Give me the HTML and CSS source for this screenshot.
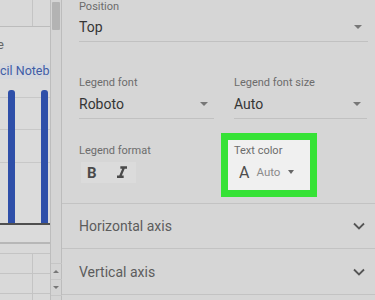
FILE: index.html
```html
<!DOCTYPE html>
<html>
<head>
<meta charset="utf-8">
<link rel="stylesheet" href="styles.css">
</head>
<body>
<div class="app">
  <div class="sheet">
    <div class="toprow"><div class="cell c1"></div><div class="cell"></div></div>
    <div class="chart">
      <div class="title">e</div>
      <div class="legend"><span>cil Noteb</span></div>
      <div class="plot">
        <div class="bar"></div>
        <div class="bar"></div>
      </div>
    </div>
    <div class="rows">
      <div class="gridrow"><div class="cell c1"></div><div class="cell"></div></div>
      <div class="gridrow"><div class="cell c1"></div><div class="cell"></div></div>
      <div class="gridrow"><div class="cell c1"></div><div class="cell"></div></div>
    </div>
  </div>
  <div class="vscroll">
    <div class="thumb"></div>
    <div class="track"></div>
    <div class="sbtn"><span class="tri up"></span></div>
    <div class="sbtn"><span class="tri down"></span></div>
    <div class="sfoot"></div>
  </div>
  <div class="panel">
    <div class="settings">
      <div class="field">
        <div class="lbl">Position</div>
        <div class="sel"><span>Top</span><i class="caret"></i></div>
      </div>
      <div class="row2">
        <div class="field">
          <div class="lbl">Legend font</div>
          <div class="sel"><span>Roboto</span><i class="caret"></i></div>
        </div>
        <div class="field">
          <div class="lbl">Legend font size</div>
          <div class="sel"><span>Auto</span><i class="caret"></i></div>
        </div>
      </div>
      <div class="row3">
        <div class="fmt">
          <div class="lbl">Legend format</div>
          <div class="btns">
            <span class="bold">B</span>
            <svg class="ital" viewBox="0 0 24 24" width="20" height="20"><path d="M10 4v3h2.21l-3.42 8H6v3h8v-3h-2.21l3.42-8H18V4z" fill="#4a4a4a"/></svg>
          </div>
        </div>
        <div class="tc">
          <div class="lbl">Text color</div>
          <div class="tcsel"><span class="bigA">A</span><span class="auto">Auto</span><i class="caret small"></i></div>
        </div>
      </div>
    </div>
    <div class="acc"><span>Horizontal axis</span><svg class="chev" viewBox="0 0 12 8" width="12" height="8"><path d="M1 1.5l5 5 5-5" fill="none" stroke="#555" stroke-width="1.8"/></svg></div>
    <div class="acc"><span>Vertical axis</span><svg class="chev" viewBox="0 0 12 8" width="12" height="8"><path d="M1 1.5l5 5 5-5" fill="none" stroke="#555" stroke-width="1.8"/></svg></div>
    <div class="acc last"></div>
  </div>
</div>
</body>
</html>
```

FILE: styles.css
```css
* { box-sizing: border-box; }
html, body { margin: 0; padding: 0; }
body {
  width: 375px;
  height: 300px;
  overflow: hidden;
  background: #d7d7d7;
  font-family: Roboto, "Liberation Sans", sans-serif;
}
.app {
  display: flex;
  height: 300px;
  overflow: hidden;
}

/* spreadsheet strip */
.sheet {
  width: 51px;
  display: flex;
  flex-direction: column;
  background: #d9d9d9;
  border-right: 1px solid #bdbdbd;
  overflow: hidden;
}
.toprow {
  height: 27px;
  flex-shrink: 0;
  display: flex;
  border-bottom: 1px solid #bcbcbc;
}
.cell { flex: 1; }
.c1 { flex: 0 0 33px; border-right: 1px solid #c4c4c4; }
.chart {
  height: 217px;
  flex-shrink: 0;
  display: flex;
  flex-direction: column;
  background: #dbdbdb;
  border-bottom: 2px solid #b7b7b7;
}
.title {
  margin: 10px 0 0 -3px;
  height: 16px;
  line-height: 16px;
  font-size: 13px;
  color: #666;
}
.legend {
  margin-top: 10px;
  height: 16px;
  line-height: 16px;
  background: #d5d8de;
  overflow: hidden;
  white-space: nowrap;
  font-size: 12.5px;
  color: #3f5ca6;
}
.plot {
  margin-top: 12px;
  height: 134px;
  flex-shrink: 0;
  display: flex;
  align-items: flex-end;
  gap: 26px;
  padding-left: 8px;
  border-bottom: 2px solid #4f4f4f;
  background: repeating-linear-gradient(to bottom, transparent 0 6px, #c8c8c8 6px 7px, transparent 7px 32.5px);
}
.bar {
  width: 7px;
  height: 133px;
  background: #2e4fa9;
  border-radius: 3px 3px 0 0;
}
.rows {
  flex: 1;
  min-height: 0;
  display: flex;
  flex-direction: column;
  padding-top: 9px;
}
.gridrow {
  height: 20px;
  flex-shrink: 0;
  display: flex;
  border-top: 1px solid #c4c4c4;
}

/* scrollbar */
.vscroll {
  width: 11px;
  display: flex;
  flex-direction: column;
  align-items: center;
  background: #d4d4d4;
  border-right: 1px solid #bcbcbc;
}
.thumb {
  margin-top: 2px;
  width: 8px;
  height: 28px;
  flex-shrink: 0;
  background: #b3b3b3;
  border-radius: 1px;
}
.track { flex: 1; }
.sbtn {
  width: 11px;
  height: 16px;
  flex-shrink: 0;
  display: flex;
  align-items: center;
  justify-content: center;
  border-top: 1px solid #c6c6c6;
}
.sfoot {
  width: 11px;
  height: 5px;
  flex-shrink: 0;
  border-top: 1px solid #c6c6c6;
}
.tri {
  width: 0;
  height: 0;
  border-left: 3px solid transparent;
  border-right: 3px solid transparent;
}
.tri.up { border-bottom: 3px solid #777; }
.tri.down { border-top: 3px solid #777; }

/* panel */
.panel {
  flex: 1;
  display: flex;
  flex-direction: column;
  background: #d6d6d6;
  overflow: hidden;
}
.settings {
  flex-shrink: 0;
  padding: 0 7px 0 17px;
}
.lbl {
  font-size: 11px;
  line-height: 14px;
  color: #6c6c6c;
  white-space: nowrap;
}
.sel {
  margin-top: 3px;
  height: 25px;
  padding: 0 6px 4px 0;
  display: flex;
  align-items: center;
  justify-content: space-between;
  border-bottom: 1px solid #c1c1c1;
  font-size: 14px;
  line-height: 20px;
  color: #353535;
}
.caret {
  width: 0;
  height: 0;
  border-left: 4px solid transparent;
  border-right: 4px solid transparent;
  border-top: 4px solid #777;
}
.caret.small {
  border-left-width: 3.5px;
  border-right-width: 3.5px;
  border-top-width: 4px;
  border-top-color: #666;
}
.row2 {
  margin-top: 34px;
  display: grid;
  grid-template-columns: 135px 133px;
  column-gap: 20px;
}
.row2 .sel { margin-top: 4px; }
.row3 {
  margin-top: 14px;
  display: grid;
  grid-template-columns: 142px 96px;
  column-gap: 0;
}
.fmt { padding-top: 11px; }
.btns {
  margin: 4px 0 0 2px;
  width: 55px;
  height: 21px;
  display: flex;
  align-items: center;
  gap: 15px;
  padding-left: 6px;
  background: #dbdbdb;
}
.bold {
  font-size: 15px;
  font-weight: 700;
  color: #4a4a4a;
}
.ital { display: block; }
.tc {
  height: 64px;
  border: 7px solid #36e236;
  background: #f0f0f0;
  padding: 4px 0 0 6px;
}
.tcsel {
  margin-top: 4px;
  height: 20px;
  display: flex;
  align-items: center;
  padding-left: 5px;
}
.bigA {
  font-size: 16px;
  color: #4d4d4d;
}
.auto {
  margin: 0 8px 0 7px;
  font-size: 11.5px;
  color: #8b8b8b;
}
.acc {
  flex-shrink: 0;
  height: 45px;
  margin-top: 6px;
  display: flex;
  align-items: center;
  justify-content: space-between;
  padding: 0 10px 0 17px;
  border-top: 1px solid #c3c3c3;
  font-size: 14px;
  color: #5c5c5c;
}
.acc + .acc { margin-top: 0; height: 46px; }
.acc.last { flex: 1 1 0; height: auto; min-height: 0; }
.chev { display: block; }
```
